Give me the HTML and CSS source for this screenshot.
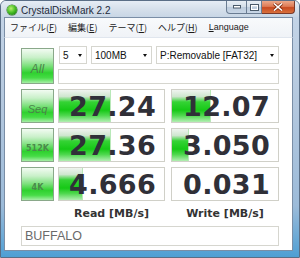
FILE: index.html
```html
<!DOCTYPE html>
<html>
<head>
<meta charset="utf-8">
<link rel="stylesheet" href="styles.css">
</head>
<body>
<div class="window">
  <div class="titlebar">
    <span class="appicon"></span>
    <span class="title">CrystalDiskMark 2.2</span>
    <div class="controls">
      <span class="wbtn min"><svg width="8" height="4" viewBox="0 0 8 4"><rect x="0.5" y="0.5" width="7" height="2.5" fill="#fff" stroke="#4a5a6a" stroke-width="1"/></svg></span>
      <span class="wbtn max"><svg width="9" height="7" viewBox="0 0 9 7"><rect x="0.5" y="0.5" width="8" height="6" fill="none" stroke="#4a5a6a" stroke-width="1"/><rect x="1.5" y="1.5" width="6" height="4" fill="none" stroke="#fff" stroke-width="1"/></svg></span>
      <span class="wbtn close"><svg width="10" height="8" viewBox="0 0 10 8"><path d="M1 0.5 L9 7.5 M9 0.5 L1 7.5" stroke="#7a2a10" stroke-width="3"/><path d="M1 0.5 L9 7.5 M9 0.5 L1 7.5" stroke="#fff" stroke-width="1.6"/></svg></span>
    </div>
  </div>
  <div class="frame">
    <div class="menubar">
      <span class="mi">ファイル(<u>F</u>)</span>
      <span class="mi">編集(<u>E</u>)</span>
      <span class="mi">テーマ(<u>T</u>)</span>
      <span class="mi">ヘルプ(<u>H</u>)</span>
      <span class="mi"><u>L</u>anguage</span>
    </div>
    <div class="client">
      <div class="btn all">All</div>
      <div class="selects">
        <div class="select s-count"><span>5</span><i class="arrow"></i></div>
        <div class="select s-size"><span>100MB</span><i class="arrow"></i></div>
        <div class="select s-drive"><span>P:Removable [FAT32]</span><i class="arrow"></i></div>
      </div>
      <div class="info"></div>

      <div class="btn seq">Seq</div>
      <div class="result"><div class="bar" style="width:52px"></div><span class="num">27.24</span></div>
      <div class="result w"><div class="bar" style="width:39px"></div><span class="num">12.07</span></div>

      <div class="btn small">512K</div>
      <div class="result"><div class="bar" style="width:52px"></div><span class="num">27.36</span></div>
      <div class="result w"><div class="bar" style="width:17px"></div><span class="num">3.050</span></div>

      <div class="btn small">4K</div>
      <div class="result"><div class="bar" style="width:24px"></div><span class="num">4.666</span></div>
      <div class="result w"><span class="num">0.031</span></div>

      <div class="label read">Read [MB/s]</div>
      <div class="label w">Write [MB/s]</div>

      <div class="comment">BUFFALO</div>
    </div>
  </div>
</div>
</body>
</html>
```

FILE: styles.css
```css
html, body {
  margin: 0;
  padding: 0;
  background: #fff;
}

.window {
  width: 300px;
  height: 258px;
  box-sizing: border-box;
  display: flex;
  flex-direction: column;
  background: linear-gradient(180deg, #c6d6e8 0%, #b4c8de 40%, #9cbbd9 80%, #4f9fd4 100%);
  border: 1px solid #5a6e86;
  border-radius: 6px 6px 0 0;
  overflow: hidden;
}

.titlebar {
  height: 16px;
  display: flex;
  align-items: center;
  background: linear-gradient(180deg, #e6edf5 0%, #d6e0eb 50%, #c8d6e5 100%);
}

.appicon {
  width: 10px;
  height: 10px;
  margin-left: 6px;
  margin-top: 2px;
  border-radius: 50%;
  background: radial-gradient(circle at 40% 35%, #b8f070 0%, #4cc028 45%, #1e8a10 80%, #0e5a08 100%);
  box-shadow: 0 0 0 0.5px #2a6a1a;
}

.title {
  margin-left: 4px;
  margin-top: 2px;
  font-family: "Liberation Sans", Arial, sans-serif;
  font-size: 10px;
  color: #1e2a3a;
}

.controls {
  margin-left: auto;
  margin-right: 4px;
  align-self: flex-start;
  display: flex;
}

.wbtn {
  height: 13px;
  display: flex;
  align-items: center;
  justify-content: center;
  box-sizing: border-box;
  border: 1px solid #6a7c92;
  border-top: none;
}

.wbtn.min {
  width: 21px;
  border-radius: 0 0 0 4px;
  background: linear-gradient(180deg, #e8eef5 0%, #d3dde8 50%, #bccbdc 51%, #c8d6e6 100%);
}

.wbtn.max {
  width: 15px;
  border-left: none;
  background: linear-gradient(180deg, #e8eef5 0%, #d3dde8 50%, #bccbdc 51%, #c8d6e6 100%);
}

.wbtn.close {
  width: 33px;
  border-left: none;
  border-color: #7a3a2a;
  border-radius: 0 0 4px 0;
  background: linear-gradient(180deg, #eba88a 0%, #de7b55 45%, #c84a20 55%, #d8703c 100%);
}

.frame {
  flex: 1;
  display: flex;
  flex-direction: column;
  padding: 0 6px 6px 3px;
}

.menubar {
  height: 19px;
  display: flex;
  align-items: center;
  background: linear-gradient(180deg, #f8fafc 0%, #f0f3f7 100%);
  border: 1px solid #7a8ea6;
  border-bottom: none;
  padding-left: 5px;
  font-family: "Noto Sans CJK JP", "Liberation Sans", sans-serif;
  font-size: 9px;
  color: #1a1a1a;
}

.mi {
  margin-right: 11px;
  line-height: 1;
}

.mi u {
  text-decoration-thickness: 1px;
  text-underline-offset: 1px;
}

.mi:last-child {
  font-family: "Liberation Sans", Arial, sans-serif;
  font-size: 9px;
}

.client {
  flex: 1;
  background: #fff;
  border: 1px solid #7a8ea6;
  border-top: 1px solid #e0e6ee;
  display: grid;
  grid-template-columns: 33px 107px 110px;
  grid-template-rows: 18px 15px 34px 34px 34px 15px 20px;
  column-gap: 4px;
  row-gap: 5px;
  padding: 8px 0 0 16px;
  align-content: start;
}

.btn {
  box-sizing: border-box;
  border: 1px solid #8aa88a;
  background: linear-gradient(180deg, #f2fbf2 0%, #c9f0c9 25%, #7be07b 50%, #2fd12f 70%, #46dc46 85%, #a6eea6 100%);
  display: flex;
  align-items: center;
  justify-content: center;
  font-family: "DejaVu Sans", sans-serif;
  color: #4a824a;
}

.btn.all {
  grid-row: 1 / span 2;
  margin-top: 2px;
  font-style: italic;
  font-size: 12px;
  font-family: "Liberation Sans", Arial, sans-serif;
  padding-top: 6px;
}

.btn.seq {
  font-style: italic;
  font-size: 11px;
  font-family: "Liberation Sans", Arial, sans-serif;
  padding-top: 6px;
}

.btn.small {
  font-size: 8px;
  font-weight: bold;
  padding-top: 6px;
  color: #4a8a4a;
}

.selects {
  grid-column: 2 / span 2;
  display: flex;
  gap: 4px;
  padding-left: 1px;
}

.select {
  box-sizing: border-box;
  height: 18px;
  border: 1px solid #d6d6cf;
  background: #fff;
  display: flex;
  align-items: center;
  padding: 0 4px 0 3px;
  font-family: "Liberation Sans", Arial, sans-serif;
  font-size: 10px;
  color: #111;
}

.select span {
  flex: 1;
}

.s-count { width: 28px; }
.s-size { width: 61px; }
.s-drive { width: 123px; }

.arrow {
  width: 0;
  height: 0;
  border-left: 2.5px solid transparent;
  border-right: 2.5px solid transparent;
  border-top: 3px solid #111;
  margin-top: 1px;
}

.info {
  grid-column: 2 / span 2;
  box-sizing: border-box;
  border: 1px solid #d6d6cf;
  background: #fff;
}

.result {
  position: relative;
  box-sizing: border-box;
  border: 1px solid #d0d0c8;
  background: #fff;
  display: flex;
  align-items: center;
  justify-content: flex-end;
  padding-right: 8px;
  overflow: hidden;
}

.w {
  justify-self: end;
  width: 108px;
}

.bar {
  position: absolute;
  left: -1px;
  top: -1px;
  bottom: -1px;
  background: linear-gradient(180deg, #f4f6f4 0%, #cfe6cf 22%, #35d335 38%, #16c816 62%, #4fd84f 78%, #c2f2c2 100%);
  border-right: 1px solid #b8e8b8;
}

.num {
  position: relative;
  font-family: "DejaVu Sans", sans-serif;
  font-weight: bold;
  font-size: 27px;
  line-height: 1;
  color: #303038;
  letter-spacing: 0.3px;
}

.label {
  font-family: "DejaVu Sans", sans-serif;
  font-weight: bold;
  font-size: 11px;
  color: #333;
  display: flex;
  align-items: center;
  justify-content: center;
}

.label.read {
  grid-column: 2;
}

.label.w {
  grid-column: 3;
}

.comment {
  grid-column: 1 / span 3;
  box-sizing: border-box;
  border: 1px solid #d6d6cf;
  background: #fff;
  display: flex;
  align-items: center;
  padding-left: 3px;
  font-family: "Liberation Sans", Arial, sans-serif;
  font-size: 12.5px;
  color: #6a6a6a;
}
```
